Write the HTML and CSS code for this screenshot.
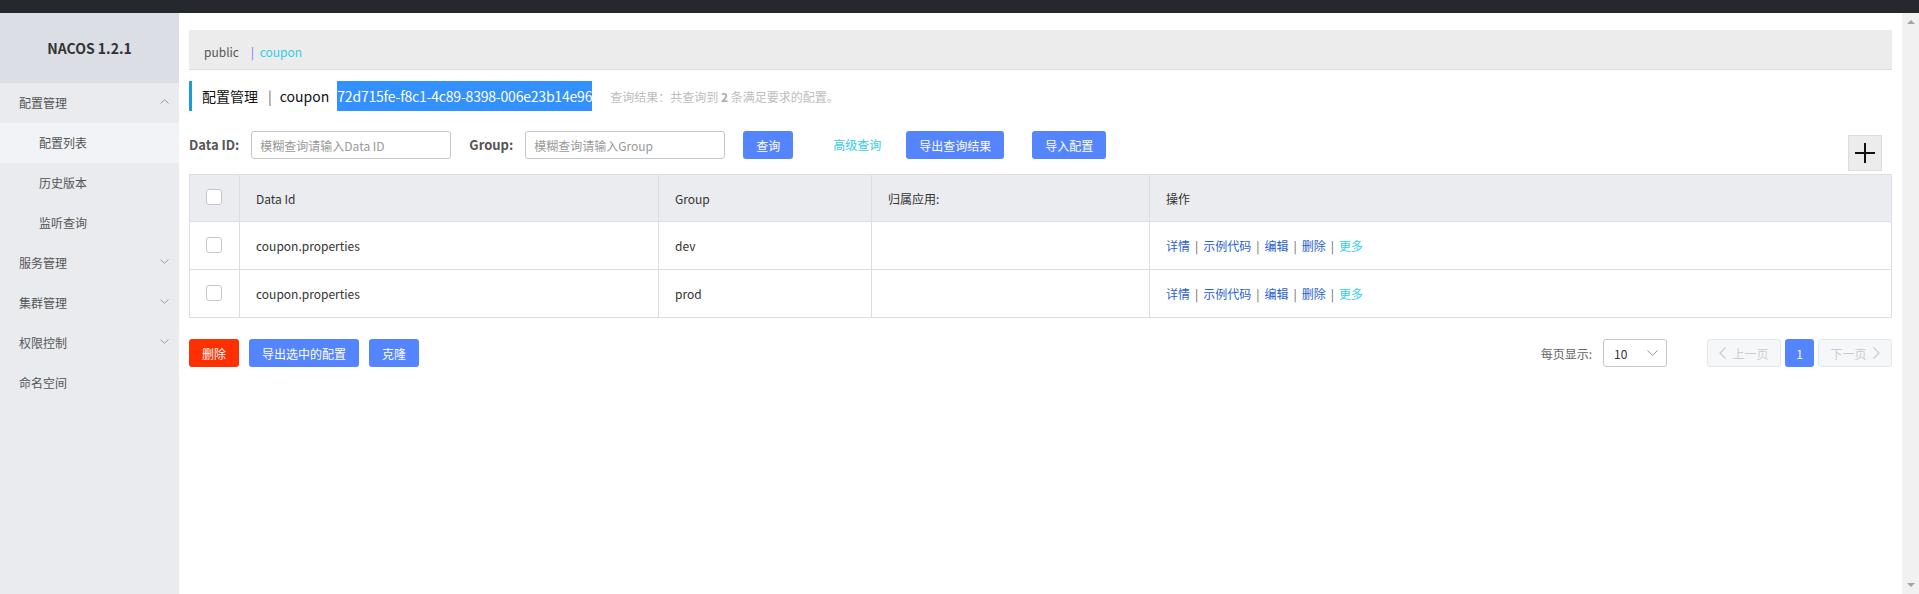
FILE: index.html
```html
<!DOCTYPE html>
<html lang="zh-CN">
<head>
  <meta charset="UTF-8">
  <title>Nacos</title>
  <link rel="stylesheet" href="styles.css">
</head>
<body>
  <div class="topbar"></div>
  <div class="layout">
    <aside class="sidebar">
      <div class="logo">NACOS 1.2.1</div>
      <ul class="nav">
        <li class="nav-item">配置管理
          <svg class="chev" width="9" height="5" viewBox="0 0 9 5"><path d="M0.5 4.5 L4.5 0.7 L8.5 4.5" fill="none" stroke="#999" stroke-width="1"/></svg>
        </li>
        <li class="nav-sub active">配置列表</li>
        <li class="nav-sub">历史版本</li>
        <li class="nav-sub">监听查询</li>
        <li class="nav-item">服务管理
          <svg class="chev" width="9" height="5" viewBox="0 0 9 5"><path d="M0.5 0.5 L4.5 4.3 L8.5 0.5" fill="none" stroke="#999" stroke-width="1"/></svg>
        </li>
        <li class="nav-item">集群管理
          <svg class="chev" width="9" height="5" viewBox="0 0 9 5"><path d="M0.5 0.5 L4.5 4.3 L8.5 0.5" fill="none" stroke="#999" stroke-width="1"/></svg>
        </li>
        <li class="nav-item">权限控制
          <svg class="chev" width="9" height="5" viewBox="0 0 9 5"><path d="M0.5 0.5 L4.5 4.3 L8.5 0.5" fill="none" stroke="#999" stroke-width="1"/></svg>
        </li>
        <li class="nav-item">命名空间</li>
      </ul>
    </aside>

    <main class="main">
      <div class="ns-bar">
        <span class="ns">public</span>
        <span class="ns-sep">|</span>
        <span class="ns selected">coupon</span>
      </div>

      <div class="title-row">
        <span class="title">配置管理</span>
        <span class="title-sep">|</span>
        <span class="title">coupon</span>
        <span class="ns-id">72d715fe-f8c1-4c89-8398-006e23b14e96</span>
        <span class="query-result">查询结果：共查询到 <b>2</b> 条满足要求的配置。</span>
      </div>

      <div class="filter-row">
        <label class="filter-label">Data ID:</label>
        <input class="filter-input" type="text" placeholder="模糊查询请输入Data ID">
        <label class="filter-label group-label">Group:</label>
        <input class="filter-input" type="text" placeholder="模糊查询请输入Group">
        <button class="btn btn-primary btn-query">查询</button>
        <a class="link-adv">高级查询</a>
        <button class="btn btn-primary btn-export">导出查询结果</button>
        <button class="btn btn-primary btn-import">导入配置</button>
        <div class="add-btn">
          <svg width="20" height="20" viewBox="0 0 20 20"><path d="M10 0 V20 M0 10 H20" stroke="#111" stroke-width="2"/></svg>
        </div>
      </div>

      <table class="config-table">
        <colgroup>
          <col style="width:50px">
          <col style="width:419px">
          <col style="width:213px">
          <col style="width:278px">
          <col>
        </colgroup>
        <thead>
          <tr>
            <th class="cb-cell"><span class="checkbox"></span></th>
            <th>Data Id</th>
            <th>Group</th>
            <th>归属应用:</th>
            <th>操作</th>
          </tr>
        </thead>
        <tbody>
          <tr>
            <td class="cb-cell"><span class="checkbox"></span></td>
            <td>coupon.properties</td>
            <td>dev</td>
            <td></td>
            <td class="ops">
              <a>详情</a><span class="sep">|</span><a>示例代码</a><span class="sep">|</span><a>编辑</a><span class="sep">|</span><a>删除</a><span class="sep">|</span><a class="more">更多</a>
            </td>
          </tr>
          <tr>
            <td class="cb-cell"><span class="checkbox"></span></td>
            <td>coupon.properties</td>
            <td>prod</td>
            <td></td>
            <td class="ops">
              <a>详情</a><span class="sep">|</span><a>示例代码</a><span class="sep">|</span><a>编辑</a><span class="sep">|</span><a>删除</a><span class="sep">|</span><a class="more">更多</a>
            </td>
          </tr>
        </tbody>
      </table>

      <div class="bottom-row">
        <button class="btn btn-danger btn-del">删除</button>
        <button class="btn btn-primary btn-export-sel">导出选中的配置</button>
        <button class="btn btn-primary btn-clone">克隆</button>

        <div class="pager">
          <span class="pager-label">每页显示:</span>
          <div class="page-size">
            <span>10</span>
            <svg width="11" height="6" viewBox="0 0 11 6"><path d="M0.5 0.5 L5.5 5.3 L10.5 0.5" fill="none" stroke="#999" stroke-width="1"/></svg>
          </div>
          <button class="page-btn prev">
            <svg width="7" height="12" viewBox="0 0 7 12"><path d="M6.5 0.5 L1 6 L6.5 11.5" fill="none" stroke="#ccc" stroke-width="1.2"/></svg>
            上一页
          </button>
          <button class="page-num">1</button>
          <button class="page-btn next">
            下一页
            <svg width="7" height="12" viewBox="0 0 7 12"><path d="M0.5 0.5 L6 6 L0.5 11.5" fill="none" stroke="#ccc" stroke-width="1.2"/></svg>
          </button>
        </div>
      </div>
    </main>

    <div class="scrollbar">
      <span class="arrow-up"></span>
      <span class="arrow-down"></span>
    </div>
  </div>
</body>
</html>
```

FILE: styles.css
```css
html, body {
  margin: 0;
  height: 100%;
  overflow: hidden;
}
body {
  font-family: "Noto Sans CJK SC", sans-serif;
  font-size: 12px;
  color: #333;
  background: #fff;
}
.topbar {
  height: 13px;
  background: #25292e;
}
.layout {
  display: flex;
  height: calc(100% - 13px);
}

/* sidebar */
.sidebar {
  width: 179px;
  flex: none;
  background: #e9ebef;
}
.logo {
  height: 70px;
  line-height: 70px;
  background: #dbdee4;
  text-align: center;
  font-size: 14px;
  font-weight: bold;
  color: #333;
}
.nav {
  list-style: none;
  margin: 0;
  padding: 0;
}
.nav li {
  height: 40px;
  line-height: 40px;
  color: #555;
  position: relative;
}
.nav-item {
  padding-left: 19px;
}
.nav-sub {
  padding-left: 39px;
}
.nav-sub.active {
  background: #f2f3f6;
}
.nav .chev {
  position: absolute;
  right: 10px;
  top: 16px;
}

/* main */
.main {
  flex: 1;
  min-width: 0;
  padding: 17px 10px 0;
}
.ns-bar {
  height: 40px;
  padding: 4px 0 0 15px;
  box-sizing: border-box;
  line-height: 36px;
  background: #ececec;
  border-bottom: 1px solid #dcdcdc;
  color: #555;
}
.ns-sep {
  color: #5584ff;
  margin: 0 3px 0 9px;
}
.ns.selected {
  color: #33cde5;
}

.title-row {
  display: flex;
  align-items: center;
  height: 30px;
  margin-top: 11px;
  border-left: 3px solid #1b9ad6;
  padding-left: 10px;
}
.title {
  font-size: 14px;
  color: #111;
}
.title-sep {
  font-size: 14px;
  color: #7a6a4a;
  margin: 0 8px 0 10px;
}
.ns-id {
  margin-left: 8px;
  height: 30px;
  line-height: 30px;
  background: #3390ff;
  color: #fff;
  font-size: 14px;
  letter-spacing: -0.2px;
}
.query-result {
  margin-left: 18px;
  color: #bdbdbd;
}
.query-result b {
  color: #aaa;
}

.filter-row {
  display: flex;
  align-items: flex-start;
  height: 40px;
  margin-top: 20px;
}
.filter-label {
  font-size: 13px;
  font-weight: bold;
  color: #555;
  line-height: 28px;
  margin-right: 12px;
}
.group-label {
  margin-left: 18px;
}
.filter-input {
  width: 200px;
  height: 28px;
  box-sizing: border-box;
  border: 1px solid #c4c6cf;
  border-radius: 3px;
  padding: 0 8px;
  font-family: inherit;
  font-size: 12px;
  color: #333;
  outline: none;
}
.filter-input::placeholder {
  color: #999;
}
.btn {
  height: 28px;
  border: none;
  border-radius: 3px;
  padding: 0 13px;
  font-family: inherit;
  font-size: 12px;
  color: #fff;
  cursor: pointer;
}
.btn-primary {
  background: #5584ff;
}
.btn-danger {
  background: #ff3000;
}
.btn-query {
  margin-left: 18px;
}
.link-adv {
  color: #33cde5;
  line-height: 28px;
  margin: 0 25px 0 40px;
}
.btn-import {
  margin-left: 28px;
}
.add-btn {
  margin-left: auto;
  margin-right: 10px;
  margin-top: 4px;
  width: 34px;
  height: 36px;
  box-sizing: border-box;
  border: 1px solid #dcdcdc;
  background: #ececec;
  display: flex;
  align-items: center;
  justify-content: center;
}

.config-table {
  width: 100%;
  margin-top: 3px;
  border-collapse: collapse;
  table-layout: fixed;
  border: 1px solid #dcdee3;
}
.config-table th,
.config-table td {
  height: 47px;
  padding: 0 16px;
  border: 1px solid #dcdee3;
  text-align: left;
  font-weight: normal;
  color: #333;
}
.config-table th {
  height: 46px;
  background: #ebecf0;
}
.config-table .cb-cell {
  padding: 0 0 0 16px;
}
.checkbox {
  display: block;
  width: 16px;
  height: 16px;
  box-sizing: border-box;
  border: 1px solid #c4c6cf;
  border-radius: 3px;
  background: #fff;
  margin-top: -2px;
}
.ops a {
  color: #2a5fce;
}
.ops a.more {
  color: #33cde5;
}
.ops .sep {
  color: #666;
  margin: 0 5px;
}

.bottom-row {
  display: flex;
  align-items: center;
  margin-top: 21px;
}
.btn-del {
  width: 50px;
  padding: 0;
}
.btn-export-sel {
  margin-left: 10px;
  width: 110px;
  padding: 0;
}
.btn-clone {
  margin-left: 10px;
  width: 50px;
  padding: 0;
}
.pager {
  margin-left: auto;
  display: flex;
  align-items: center;
}
.pager-label {
  color: #666;
  margin-right: 11px;
}
.page-size {
  width: 64px;
  height: 28px;
  box-sizing: border-box;
  border: 1px solid #c4c6cf;
  border-radius: 3px;
  display: flex;
  align-items: center;
  justify-content: space-between;
  padding: 0 8px 0 10px;
  color: #333;
}
.page-btn {
  width: 74px;
  height: 28px;
  box-sizing: border-box;
  border: 1px solid #e6e7eb;
  border-radius: 3px;
  background: #f6f7f9;
  color: #ccc;
  font-family: inherit;
  font-size: 12px;
  display: flex;
  align-items: center;
  justify-content: center;
  gap: 6px;
  padding: 0;
}
.page-btn.prev {
  margin-left: 40px;
}
.page-num {
  width: 29px;
  height: 28px;
  margin: 0 4px;
  border: none;
  border-radius: 3px;
  background: #5584ff;
  color: #fff;
  font-family: inherit;
  font-size: 12px;
  padding: 0;
}

.scrollbar {
  width: 17px;
  flex: none;
  background: #f1f1f1;
  position: relative;
}
.arrow-up,
.arrow-down {
  position: absolute;
  left: 5px;
  width: 0;
  height: 0;
  border-left: 4px solid transparent;
  border-right: 4px solid transparent;
}
.arrow-up {
  top: 7px;
  border-bottom: 4px solid #a3a3a3;
}
.arrow-down {
  bottom: 7px;
  border-top: 4px solid #a3a3a3;
}
```
